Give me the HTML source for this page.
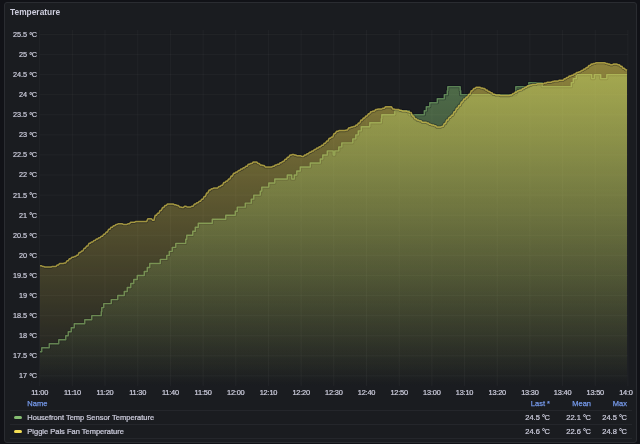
<!DOCTYPE html>
<html><head><meta charset="utf-8"><style>
html,body{margin:0;padding:0;}
body{width:640px;height:444px;overflow:hidden;background:#111217;position:relative;font-family:"Liberation Sans",sans-serif;}
.panel{position:absolute;left:4px;top:2px;width:631px;height:439px;background:#1a1c20;border:1px solid #2a2c31;border-radius:3px;overflow:hidden;}
.clip{position:absolute;left:0;top:0;width:636px;height:444px;overflow:hidden;will-change:transform;}
.t{position:absolute;white-space:nowrap;color:#ccccdc;-webkit-text-stroke:0.22px #ccccdc;}
.title{left:10px;top:7px;font-size:8.4px;font-weight:bold;line-height:10px;-webkit-text-stroke:0;}
svg{position:absolute;left:0;top:0;}
.yl{left:-3px;width:40px;text-align:right;font-size:7.3px;line-height:10px;-webkit-text-stroke:0.2px #ccccdc;}
.xl{top:387.8px;width:40px;text-align:center;font-size:7.4px;letter-spacing:-0.2px;line-height:10px;}
.leg{font-size:7.5px;line-height:10px;}
.dg{position:relative;top:0.12em;margin-right:-0.05em;}
.hd{color:#7598e8;-webkit-text-stroke:0.25px #7598e8;}
.rule{position:absolute;left:10px;width:622px;height:1px;background:#24262b;}
.mk{position:absolute;left:14.1px;width:8px;height:3px;border-radius:1.5px;}
</style></head><body>
<div class="panel"></div>
<div class="clip">
<svg width="640" height="444" viewBox="0 0 640 444">
<defs>
<linearGradient id="gg" gradientUnits="userSpaceOnUse" x1="0" y1="30" x2="0" y2="386">
<stop offset="0" stop-color="#85bd72" stop-opacity="0.58"/><stop offset="1" stop-color="#85bd72" stop-opacity="0"/></linearGradient>
<linearGradient id="yg" gradientUnits="userSpaceOnUse" x1="0" y1="30" x2="0" y2="386">
<stop offset="0" stop-color="#f5df55" stop-opacity="0.58"/><stop offset="1" stop-color="#f5df55" stop-opacity="0"/></linearGradient>
</defs>
<path d="M39.70,30V386M72.38,30V386M105.06,30V386M137.74,30V386M170.42,30V386M203.10,30V386M235.78,30V386M268.46,30V386M301.14,30V386M333.82,30V386M366.50,30V386M399.18,30V386M431.86,30V386M464.54,30V386M497.22,30V386M529.90,30V386M562.58,30V386M595.26,30V386M627.94,30V386M39.7,34.40H628M39.7,54.49H628M39.7,74.58H628M39.7,94.67H628M39.7,114.76H628M39.7,134.85H628M39.7,154.94H628M39.7,175.03H628M39.7,195.12H628M39.7,215.21H628M39.7,235.30H628M39.7,255.39H628M39.7,275.48H628M39.7,295.57H628M39.7,315.66H628M39.7,335.75H628M39.7,355.84H628M39.7,375.93H628" stroke="rgba(204,204,220,0.045)" stroke-width="1" fill="none"/>
<path d="M40.00,351.82 L41.75,351.82 L41.75,347.80 L49.25,347.80 L49.25,343.79 L58.75,343.79 L58.75,339.77 L65.75,339.77 L65.75,335.75 L68.25,335.75 L68.25,331.73 L71.25,331.73 L71.25,327.71 L74.25,327.71 L74.25,323.70 L84.75,323.70 L84.75,319.68 L91.75,319.68 L91.75,315.66 L101.25,315.66 L101.25,311.64 L101.75,311.64 L101.75,307.62 L103.75,307.62 L103.75,303.61 L111.25,303.61 L111.25,299.59 L117.75,299.59 L117.75,295.57 L124.25,295.57 L124.25,291.55 L127.25,291.55 L127.25,287.53 L130.75,287.53 L130.75,283.52 L133.75,283.52 L133.75,279.50 L137.25,279.50 L137.25,275.48 L144.25,275.48 L144.25,271.46 L147.25,271.46 L147.25,267.44 L149.75,267.44 L149.75,263.43 L160.25,263.43 L160.25,259.41 L166.75,259.41 L166.75,255.39 L169.25,255.39 L169.25,251.37 L172.25,251.37 L172.25,247.35 L175.75,247.35 L175.75,243.34 L185.75,243.34 L185.75,239.32 L186.75,239.32 L186.75,235.30 L192.75,235.30 L192.75,231.28 L195.25,231.28 L195.25,227.26 L198.25,227.26 L198.25,223.25 L212.25,223.25 L212.25,219.23 L225.75,219.23 L225.75,215.21 L235.25,215.21 L235.25,211.19 L237.25,211.19 L237.25,207.17 L245.25,207.17 L245.25,203.16 L251.25,203.16 L251.25,199.14 L253.75,199.14 L253.75,195.12 L260.25,195.12 L260.25,191.10 L261.75,191.10 L261.75,187.08 L268.75,187.08 L268.75,183.07 L274.75,183.07 L274.75,179.05 L287.25,179.05 L287.25,175.03 L291.75,175.03 L291.75,179.05 L294.25,179.05 L294.25,175.03 L296.75,175.03 L296.75,171.01 L300.25,171.01 L300.25,166.99 L310.25,166.99 L310.25,162.98 L320.25,162.98 L320.25,158.96 L322.75,158.96 L322.75,154.94 L327.25,154.94 L327.25,150.92 L333.25,150.92 L333.25,154.94 L334.75,154.94 L334.75,150.92 L338.75,150.92 L338.75,146.90 L341.75,146.90 L341.75,142.89 L352.75,142.89 L352.75,138.87 L355.75,138.87 L355.75,134.85 L358.25,134.85 L358.25,130.83 L361.25,130.83 L361.25,126.81 L369.75,126.81 L369.75,122.80 L381.25,122.80 L381.25,118.78 L381.75,118.78 L381.75,114.76 L394.75,114.76 L394.75,110.74 L409.25,110.74 L409.25,114.76 L424.25,114.76 L424.25,110.74 L426.25,110.74 L426.25,106.72 L429.75,106.72 L429.75,102.71 L437.25,102.71 L437.25,98.69 L444.25,98.69 L444.25,94.67 L447.25,94.67 L447.25,90.65 L447.75,90.65 L447.75,86.63 L460.25,86.63 L460.25,90.65 L460.75,90.65 L460.75,94.67 L515.75,94.67 L515.75,86.63 L528.75,86.63 L528.75,82.62 L542.25,82.62 L542.25,86.63 L571.25,86.63 L571.25,82.62 L573.25,82.62 L573.25,78.60 L576.25,78.60 L576.25,74.58 L591.75,74.58 L591.75,78.60 L594.25,78.60 L594.25,74.58 L600.75,74.58 L600.75,78.60 L606.75,78.60 L606.75,74.58 L627.00,74.58 L627.00,386 L40.00,386 Z" fill="url(#gg)"/>
<path d="M40.00,351.82 L41.75,351.82 L41.75,347.80 L49.25,347.80 L49.25,343.79 L58.75,343.79 L58.75,339.77 L65.75,339.77 L65.75,335.75 L68.25,335.75 L68.25,331.73 L71.25,331.73 L71.25,327.71 L74.25,327.71 L74.25,323.70 L84.75,323.70 L84.75,319.68 L91.75,319.68 L91.75,315.66 L101.25,315.66 L101.25,311.64 L101.75,311.64 L101.75,307.62 L103.75,307.62 L103.75,303.61 L111.25,303.61 L111.25,299.59 L117.75,299.59 L117.75,295.57 L124.25,295.57 L124.25,291.55 L127.25,291.55 L127.25,287.53 L130.75,287.53 L130.75,283.52 L133.75,283.52 L133.75,279.50 L137.25,279.50 L137.25,275.48 L144.25,275.48 L144.25,271.46 L147.25,271.46 L147.25,267.44 L149.75,267.44 L149.75,263.43 L160.25,263.43 L160.25,259.41 L166.75,259.41 L166.75,255.39 L169.25,255.39 L169.25,251.37 L172.25,251.37 L172.25,247.35 L175.75,247.35 L175.75,243.34 L185.75,243.34 L185.75,239.32 L186.75,239.32 L186.75,235.30 L192.75,235.30 L192.75,231.28 L195.25,231.28 L195.25,227.26 L198.25,227.26 L198.25,223.25 L212.25,223.25 L212.25,219.23 L225.75,219.23 L225.75,215.21 L235.25,215.21 L235.25,211.19 L237.25,211.19 L237.25,207.17 L245.25,207.17 L245.25,203.16 L251.25,203.16 L251.25,199.14 L253.75,199.14 L253.75,195.12 L260.25,195.12 L260.25,191.10 L261.75,191.10 L261.75,187.08 L268.75,187.08 L268.75,183.07 L274.75,183.07 L274.75,179.05 L287.25,179.05 L287.25,175.03 L291.75,175.03 L291.75,179.05 L294.25,179.05 L294.25,175.03 L296.75,175.03 L296.75,171.01 L300.25,171.01 L300.25,166.99 L310.25,166.99 L310.25,162.98 L320.25,162.98 L320.25,158.96 L322.75,158.96 L322.75,154.94 L327.25,154.94 L327.25,150.92 L333.25,150.92 L333.25,154.94 L334.75,154.94 L334.75,150.92 L338.75,150.92 L338.75,146.90 L341.75,146.90 L341.75,142.89 L352.75,142.89 L352.75,138.87 L355.75,138.87 L355.75,134.85 L358.25,134.85 L358.25,130.83 L361.25,130.83 L361.25,126.81 L369.75,126.81 L369.75,122.80 L381.25,122.80 L381.25,118.78 L381.75,118.78 L381.75,114.76 L394.75,114.76 L394.75,110.74 L409.25,110.74 L409.25,114.76 L424.25,114.76 L424.25,110.74 L426.25,110.74 L426.25,106.72 L429.75,106.72 L429.75,102.71 L437.25,102.71 L437.25,98.69 L444.25,98.69 L444.25,94.67 L447.25,94.67 L447.25,90.65 L447.75,90.65 L447.75,86.63 L460.25,86.63 L460.25,90.65 L460.75,90.65 L460.75,94.67 L515.75,94.67 L515.75,86.63 L528.75,86.63 L528.75,82.62 L542.25,82.62 L542.25,86.63 L571.25,86.63 L571.25,82.62 L573.25,82.62 L573.25,78.60 L576.25,78.60 L576.25,74.58 L591.75,74.58 L591.75,78.60 L594.25,78.60 L594.25,74.58 L600.75,74.58 L600.75,78.60 L606.75,78.60 L606.75,74.58 L627.00,74.58" fill="none" stroke="#0a0c16" stroke-opacity="0.35" stroke-width="3.2" stroke-linejoin="round"/>
<path d="M40.00,351.82 L41.75,351.82 L41.75,347.80 L49.25,347.80 L49.25,343.79 L58.75,343.79 L58.75,339.77 L65.75,339.77 L65.75,335.75 L68.25,335.75 L68.25,331.73 L71.25,331.73 L71.25,327.71 L74.25,327.71 L74.25,323.70 L84.75,323.70 L84.75,319.68 L91.75,319.68 L91.75,315.66 L101.25,315.66 L101.25,311.64 L101.75,311.64 L101.75,307.62 L103.75,307.62 L103.75,303.61 L111.25,303.61 L111.25,299.59 L117.75,299.59 L117.75,295.57 L124.25,295.57 L124.25,291.55 L127.25,291.55 L127.25,287.53 L130.75,287.53 L130.75,283.52 L133.75,283.52 L133.75,279.50 L137.25,279.50 L137.25,275.48 L144.25,275.48 L144.25,271.46 L147.25,271.46 L147.25,267.44 L149.75,267.44 L149.75,263.43 L160.25,263.43 L160.25,259.41 L166.75,259.41 L166.75,255.39 L169.25,255.39 L169.25,251.37 L172.25,251.37 L172.25,247.35 L175.75,247.35 L175.75,243.34 L185.75,243.34 L185.75,239.32 L186.75,239.32 L186.75,235.30 L192.75,235.30 L192.75,231.28 L195.25,231.28 L195.25,227.26 L198.25,227.26 L198.25,223.25 L212.25,223.25 L212.25,219.23 L225.75,219.23 L225.75,215.21 L235.25,215.21 L235.25,211.19 L237.25,211.19 L237.25,207.17 L245.25,207.17 L245.25,203.16 L251.25,203.16 L251.25,199.14 L253.75,199.14 L253.75,195.12 L260.25,195.12 L260.25,191.10 L261.75,191.10 L261.75,187.08 L268.75,187.08 L268.75,183.07 L274.75,183.07 L274.75,179.05 L287.25,179.05 L287.25,175.03 L291.75,175.03 L291.75,179.05 L294.25,179.05 L294.25,175.03 L296.75,175.03 L296.75,171.01 L300.25,171.01 L300.25,166.99 L310.25,166.99 L310.25,162.98 L320.25,162.98 L320.25,158.96 L322.75,158.96 L322.75,154.94 L327.25,154.94 L327.25,150.92 L333.25,150.92 L333.25,154.94 L334.75,154.94 L334.75,150.92 L338.75,150.92 L338.75,146.90 L341.75,146.90 L341.75,142.89 L352.75,142.89 L352.75,138.87 L355.75,138.87 L355.75,134.85 L358.25,134.85 L358.25,130.83 L361.25,130.83 L361.25,126.81 L369.75,126.81 L369.75,122.80 L381.25,122.80 L381.25,118.78 L381.75,118.78 L381.75,114.76 L394.75,114.76 L394.75,110.74 L409.25,110.74 L409.25,114.76 L424.25,114.76 L424.25,110.74 L426.25,110.74 L426.25,106.72 L429.75,106.72 L429.75,102.71 L437.25,102.71 L437.25,98.69 L444.25,98.69 L444.25,94.67 L447.25,94.67 L447.25,90.65 L447.75,90.65 L447.75,86.63 L460.25,86.63 L460.25,90.65 L460.75,90.65 L460.75,94.67 L515.75,94.67 L515.75,86.63 L528.75,86.63 L528.75,82.62 L542.25,82.62 L542.25,86.63 L571.25,86.63 L571.25,82.62 L573.25,82.62 L573.25,78.60 L576.25,78.60 L576.25,74.58 L591.75,74.58 L591.75,78.60 L594.25,78.60 L594.25,74.58 L600.75,74.58 L600.75,78.60 L606.75,78.60 L606.75,74.58 L627.00,74.58" fill="none" stroke="#85bd72" stroke-opacity="0.62" stroke-width="1.4" stroke-linejoin="round"/>
<path d="M40.00,265.70 L41.23,265.70 L42.45,266.40 L43.67,266.40 L44.90,267.10 L46.12,267.10 L47.35,267.10 L48.58,267.10 L49.80,267.10 L51.02,267.10 L52.25,266.40 L53.48,266.40 L54.70,266.40 L55.93,266.40 L57.15,265.00 L58.38,265.00 L59.60,263.60 L60.83,263.60 L62.05,263.60 L63.27,263.60 L64.50,262.90 L65.72,262.90 L66.95,260.80 L68.18,260.80 L69.40,258.70 L70.62,258.70 L71.85,257.30 L73.08,257.30 L74.30,256.60 L75.53,256.60 L76.75,255.20 L77.97,255.20 L79.20,252.40 L80.43,252.40 L81.65,251.00 L82.88,251.00 L84.10,248.20 L85.33,248.20 L86.55,246.10 L87.78,246.10 L89.00,243.30 L90.22,243.30 L91.45,241.90 L92.68,241.90 L93.90,240.50 L95.12,240.50 L96.35,239.10 L97.58,239.10 L98.80,237.70 L100.03,237.70 L101.25,236.30 L102.47,236.30 L103.70,234.20 L104.93,234.20 L106.15,232.10 L107.38,232.10 L108.60,229.30 L109.83,229.30 L111.05,227.20 L112.28,227.20 L113.50,225.80 L114.72,225.80 L115.95,224.40 L117.18,224.40 L118.40,223.70 L119.62,223.70 L120.85,223.70 L122.08,223.70 L123.30,224.40 L124.53,224.40 L125.75,224.40 L126.97,224.40 L128.20,223.70 L129.43,223.70 L130.65,222.30 L131.88,222.30 L133.10,222.30 L134.33,222.30 L135.55,221.60 L136.78,221.60 L138.00,221.60 L139.22,221.60 L140.45,221.60 L141.68,221.60 L142.90,221.60 L144.12,221.60 L145.35,221.60 L146.58,221.60 L147.80,218.80 L149.03,218.80 L150.25,218.80 L151.47,218.80 L152.70,220.20 L153.93,220.20 L155.15,215.30 L156.38,215.30 L157.60,213.20 L158.83,213.20 L160.05,210.40 L161.28,210.40 L162.50,207.60 L163.72,207.60 L164.95,205.50 L166.18,205.50 L167.40,204.10 L168.62,204.10 L169.85,204.10 L171.08,204.10 L172.30,204.10 L173.53,204.10 L174.75,204.80 L175.98,204.80 L177.20,205.50 L178.43,205.50 L179.65,206.90 L180.88,206.90 L182.10,207.60 L183.33,207.60 L184.55,206.20 L185.78,206.20 L187.00,206.90 L188.23,206.90 L189.45,206.90 L190.68,206.90 L191.90,206.20 L193.12,206.20 L194.35,204.10 L195.58,204.10 L196.80,202.70 L198.03,202.70 L199.25,201.30 L200.48,201.30 L201.70,199.20 L202.93,199.20 L204.15,196.40 L205.38,196.40 L206.60,192.90 L207.83,192.90 L209.05,190.10 L210.28,190.10 L211.50,188.70 L212.73,188.70 L213.95,188.00 L215.18,188.00 L216.40,188.00 L217.62,188.00 L218.85,186.60 L220.08,186.60 L221.30,185.20 L222.53,185.20 L223.75,182.40 L224.98,182.40 L226.20,181.00 L227.43,181.00 L228.65,178.90 L229.88,178.90 L231.10,176.10 L232.33,176.10 L233.55,173.30 L234.78,173.30 L236.00,171.90 L237.23,171.90 L238.45,170.50 L239.68,170.50 L240.90,169.10 L242.12,169.10 L243.35,167.70 L244.58,167.70 L245.80,166.30 L247.03,166.30 L248.25,164.20 L249.48,164.20 L250.70,163.50 L251.93,163.50 L253.15,162.10 L254.38,162.10 L255.60,162.10 L256.83,162.10 L258.05,163.50 L259.27,163.50 L260.50,164.90 L261.73,164.90 L262.95,165.60 L264.18,165.60 L265.40,167.00 L266.62,167.00 L267.85,167.00 L269.08,167.00 L270.30,167.00 L271.52,167.00 L272.75,166.30 L273.98,166.30 L275.20,164.90 L276.43,164.90 L277.65,164.20 L278.88,164.20 L280.10,162.80 L281.33,162.80 L282.55,161.40 L283.77,161.40 L285.00,159.30 L286.23,159.30 L287.45,157.20 L288.68,157.20 L289.90,155.10 L291.12,155.10 L292.35,154.40 L293.58,154.40 L294.80,155.10 L296.02,155.10 L297.25,155.80 L298.48,155.80 L299.70,155.80 L300.93,155.80 L302.15,156.50 L303.38,156.50 L304.60,155.10 L305.83,155.10 L307.05,153.70 L308.27,153.70 L309.50,152.30 L310.73,152.30 L311.95,150.90 L313.18,150.90 L314.40,149.50 L315.62,149.50 L316.85,148.10 L318.08,148.10 L319.30,146.70 L320.52,146.70 L321.75,145.30 L322.98,145.30 L324.20,143.20 L325.43,143.20 L326.65,141.10 L327.88,141.10 L329.10,138.30 L330.33,138.30 L331.55,136.90 L332.77,136.90 L334.00,133.40 L335.23,133.40 L336.45,131.30 L337.68,131.30 L338.90,130.60 L340.12,130.60 L341.35,130.60 L342.58,130.60 L343.80,130.60 L345.02,130.60 L346.25,129.90 L347.48,129.90 L348.70,127.80 L349.93,127.80 L351.15,127.10 L352.38,127.10 L353.60,126.40 L354.83,126.40 L356.05,125.00 L357.27,125.00 L358.50,122.90 L359.73,122.90 L360.95,120.10 L362.18,120.10 L363.40,118.00 L364.62,118.00 L365.85,115.90 L367.08,115.90 L368.30,113.80 L369.52,113.80 L370.75,111.70 L371.98,111.70 L373.20,111.00 L374.43,111.00 L375.65,109.60 L376.88,109.60 L378.10,108.90 L379.33,108.90 L380.55,108.90 L381.77,108.90 L383.00,108.20 L384.23,108.20 L385.45,106.80 L386.68,106.80 L387.90,106.80 L389.12,106.80 L390.35,106.80 L391.58,106.80 L392.80,108.90 L394.02,108.90 L395.25,109.60 L396.48,109.60 L397.70,109.60 L398.93,109.60 L400.15,110.30 L401.38,110.30 L402.60,111.00 L403.83,111.00 L405.05,111.00 L406.27,111.00 L407.50,111.70 L408.73,111.70 L409.95,112.40 L411.18,112.40 L412.40,115.90 L413.62,115.90 L414.85,118.70 L416.08,118.70 L417.30,120.10 L418.52,120.10 L419.75,120.80 L420.98,120.80 L422.20,122.20 L423.43,122.20 L424.65,122.20 L425.88,122.20 L427.10,122.90 L428.33,122.90 L429.55,124.30 L430.77,124.30 L432.00,125.00 L433.23,125.00 L434.45,125.70 L435.68,125.70 L436.90,127.10 L438.12,127.10 L439.35,127.10 L440.58,127.10 L441.80,126.40 L443.03,126.40 L444.25,123.60 L445.48,123.60 L446.70,120.10 L447.93,120.10 L449.15,117.30 L450.38,117.30 L451.60,115.20 L452.83,115.20 L454.05,111.70 L455.28,111.70 L456.50,108.20 L457.73,108.20 L458.95,105.40 L460.18,105.40 L461.40,101.90 L462.62,101.90 L463.85,99.10 L465.08,99.10 L466.30,97.00 L467.53,97.00 L468.75,94.20 L469.98,94.20 L471.20,90.70 L472.43,90.70 L473.65,88.60 L474.88,88.60 L476.10,87.20 L477.33,87.20 L478.55,87.20 L479.78,87.20 L481.00,87.90 L482.23,87.90 L483.45,88.60 L484.68,88.60 L485.90,90.00 L487.12,90.00 L488.35,91.40 L489.58,91.40 L490.80,92.80 L492.03,92.80 L493.25,94.20 L494.48,94.20 L495.70,94.90 L496.93,94.90 L498.15,94.90 L499.38,94.90 L500.60,95.60 L501.83,95.60 L503.05,95.60 L504.28,95.60 L505.50,95.60 L506.73,95.60 L507.95,95.60 L509.18,95.60 L510.40,94.90 L511.62,94.90 L512.85,93.50 L514.08,93.50 L515.30,92.10 L516.52,92.10 L517.75,90.70 L518.98,90.70 L520.20,90.00 L521.43,90.00 L522.65,88.60 L523.88,88.60 L525.10,87.20 L526.33,87.20 L527.55,85.80 L528.77,85.80 L530.00,85.10 L531.23,85.10 L532.45,84.40 L533.68,84.40 L534.90,84.40 L536.12,84.40 L537.35,83.70 L538.58,83.70 L539.80,83.70 L541.02,83.70 L542.25,83.70 L543.48,83.70 L544.70,83.00 L545.93,83.00 L547.15,82.30 L548.38,82.30 L549.60,82.30 L550.83,82.30 L552.05,81.60 L553.28,81.60 L554.50,80.90 L555.73,80.90 L556.95,80.90 L558.18,80.90 L559.40,80.20 L560.62,80.20 L561.85,80.20 L563.08,80.20 L564.30,78.80 L565.53,78.80 L566.75,77.40 L567.98,77.40 L569.20,76.00 L570.43,76.00 L571.65,75.30 L572.88,75.30 L574.10,73.90 L575.33,73.90 L576.55,72.50 L577.78,72.50 L579.00,71.80 L580.23,71.80 L581.45,70.40 L582.68,70.40 L583.90,69.00 L585.12,69.00 L586.35,67.60 L587.58,67.60 L588.80,65.50 L590.03,65.50 L591.25,64.10 L592.48,64.10 L593.70,63.40 L594.93,63.40 L596.15,62.70 L597.38,62.70 L598.60,62.70 L599.83,62.70 L601.05,62.70 L602.28,62.70 L603.50,62.70 L604.73,62.70 L605.95,63.40 L607.18,63.40 L608.40,64.10 L609.62,64.10 L610.85,64.80 L612.08,64.80 L613.30,64.10 L614.53,64.10 L615.75,64.10 L616.98,64.10 L618.20,64.80 L619.43,64.80 L620.65,66.20 L621.88,66.20 L623.10,68.30 L624.33,68.30 L625.55,69.70 L626.28,69.70 L627.00,70.40 L627.00,386 L40.00,386 Z" fill="url(#yg)"/>
<path d="M40.00,265.70 L41.23,265.70 L42.45,266.40 L43.67,266.40 L44.90,267.10 L46.12,267.10 L47.35,267.10 L48.58,267.10 L49.80,267.10 L51.02,267.10 L52.25,266.40 L53.48,266.40 L54.70,266.40 L55.93,266.40 L57.15,265.00 L58.38,265.00 L59.60,263.60 L60.83,263.60 L62.05,263.60 L63.27,263.60 L64.50,262.90 L65.72,262.90 L66.95,260.80 L68.18,260.80 L69.40,258.70 L70.62,258.70 L71.85,257.30 L73.08,257.30 L74.30,256.60 L75.53,256.60 L76.75,255.20 L77.97,255.20 L79.20,252.40 L80.43,252.40 L81.65,251.00 L82.88,251.00 L84.10,248.20 L85.33,248.20 L86.55,246.10 L87.78,246.10 L89.00,243.30 L90.22,243.30 L91.45,241.90 L92.68,241.90 L93.90,240.50 L95.12,240.50 L96.35,239.10 L97.58,239.10 L98.80,237.70 L100.03,237.70 L101.25,236.30 L102.47,236.30 L103.70,234.20 L104.93,234.20 L106.15,232.10 L107.38,232.10 L108.60,229.30 L109.83,229.30 L111.05,227.20 L112.28,227.20 L113.50,225.80 L114.72,225.80 L115.95,224.40 L117.18,224.40 L118.40,223.70 L119.62,223.70 L120.85,223.70 L122.08,223.70 L123.30,224.40 L124.53,224.40 L125.75,224.40 L126.97,224.40 L128.20,223.70 L129.43,223.70 L130.65,222.30 L131.88,222.30 L133.10,222.30 L134.33,222.30 L135.55,221.60 L136.78,221.60 L138.00,221.60 L139.22,221.60 L140.45,221.60 L141.68,221.60 L142.90,221.60 L144.12,221.60 L145.35,221.60 L146.58,221.60 L147.80,218.80 L149.03,218.80 L150.25,218.80 L151.47,218.80 L152.70,220.20 L153.93,220.20 L155.15,215.30 L156.38,215.30 L157.60,213.20 L158.83,213.20 L160.05,210.40 L161.28,210.40 L162.50,207.60 L163.72,207.60 L164.95,205.50 L166.18,205.50 L167.40,204.10 L168.62,204.10 L169.85,204.10 L171.08,204.10 L172.30,204.10 L173.53,204.10 L174.75,204.80 L175.98,204.80 L177.20,205.50 L178.43,205.50 L179.65,206.90 L180.88,206.90 L182.10,207.60 L183.33,207.60 L184.55,206.20 L185.78,206.20 L187.00,206.90 L188.23,206.90 L189.45,206.90 L190.68,206.90 L191.90,206.20 L193.12,206.20 L194.35,204.10 L195.58,204.10 L196.80,202.70 L198.03,202.70 L199.25,201.30 L200.48,201.30 L201.70,199.20 L202.93,199.20 L204.15,196.40 L205.38,196.40 L206.60,192.90 L207.83,192.90 L209.05,190.10 L210.28,190.10 L211.50,188.70 L212.73,188.70 L213.95,188.00 L215.18,188.00 L216.40,188.00 L217.62,188.00 L218.85,186.60 L220.08,186.60 L221.30,185.20 L222.53,185.20 L223.75,182.40 L224.98,182.40 L226.20,181.00 L227.43,181.00 L228.65,178.90 L229.88,178.90 L231.10,176.10 L232.33,176.10 L233.55,173.30 L234.78,173.30 L236.00,171.90 L237.23,171.90 L238.45,170.50 L239.68,170.50 L240.90,169.10 L242.12,169.10 L243.35,167.70 L244.58,167.70 L245.80,166.30 L247.03,166.30 L248.25,164.20 L249.48,164.20 L250.70,163.50 L251.93,163.50 L253.15,162.10 L254.38,162.10 L255.60,162.10 L256.83,162.10 L258.05,163.50 L259.27,163.50 L260.50,164.90 L261.73,164.90 L262.95,165.60 L264.18,165.60 L265.40,167.00 L266.62,167.00 L267.85,167.00 L269.08,167.00 L270.30,167.00 L271.52,167.00 L272.75,166.30 L273.98,166.30 L275.20,164.90 L276.43,164.90 L277.65,164.20 L278.88,164.20 L280.10,162.80 L281.33,162.80 L282.55,161.40 L283.77,161.40 L285.00,159.30 L286.23,159.30 L287.45,157.20 L288.68,157.20 L289.90,155.10 L291.12,155.10 L292.35,154.40 L293.58,154.40 L294.80,155.10 L296.02,155.10 L297.25,155.80 L298.48,155.80 L299.70,155.80 L300.93,155.80 L302.15,156.50 L303.38,156.50 L304.60,155.10 L305.83,155.10 L307.05,153.70 L308.27,153.70 L309.50,152.30 L310.73,152.30 L311.95,150.90 L313.18,150.90 L314.40,149.50 L315.62,149.50 L316.85,148.10 L318.08,148.10 L319.30,146.70 L320.52,146.70 L321.75,145.30 L322.98,145.30 L324.20,143.20 L325.43,143.20 L326.65,141.10 L327.88,141.10 L329.10,138.30 L330.33,138.30 L331.55,136.90 L332.77,136.90 L334.00,133.40 L335.23,133.40 L336.45,131.30 L337.68,131.30 L338.90,130.60 L340.12,130.60 L341.35,130.60 L342.58,130.60 L343.80,130.60 L345.02,130.60 L346.25,129.90 L347.48,129.90 L348.70,127.80 L349.93,127.80 L351.15,127.10 L352.38,127.10 L353.60,126.40 L354.83,126.40 L356.05,125.00 L357.27,125.00 L358.50,122.90 L359.73,122.90 L360.95,120.10 L362.18,120.10 L363.40,118.00 L364.62,118.00 L365.85,115.90 L367.08,115.90 L368.30,113.80 L369.52,113.80 L370.75,111.70 L371.98,111.70 L373.20,111.00 L374.43,111.00 L375.65,109.60 L376.88,109.60 L378.10,108.90 L379.33,108.90 L380.55,108.90 L381.77,108.90 L383.00,108.20 L384.23,108.20 L385.45,106.80 L386.68,106.80 L387.90,106.80 L389.12,106.80 L390.35,106.80 L391.58,106.80 L392.80,108.90 L394.02,108.90 L395.25,109.60 L396.48,109.60 L397.70,109.60 L398.93,109.60 L400.15,110.30 L401.38,110.30 L402.60,111.00 L403.83,111.00 L405.05,111.00 L406.27,111.00 L407.50,111.70 L408.73,111.70 L409.95,112.40 L411.18,112.40 L412.40,115.90 L413.62,115.90 L414.85,118.70 L416.08,118.70 L417.30,120.10 L418.52,120.10 L419.75,120.80 L420.98,120.80 L422.20,122.20 L423.43,122.20 L424.65,122.20 L425.88,122.20 L427.10,122.90 L428.33,122.90 L429.55,124.30 L430.77,124.30 L432.00,125.00 L433.23,125.00 L434.45,125.70 L435.68,125.70 L436.90,127.10 L438.12,127.10 L439.35,127.10 L440.58,127.10 L441.80,126.40 L443.03,126.40 L444.25,123.60 L445.48,123.60 L446.70,120.10 L447.93,120.10 L449.15,117.30 L450.38,117.30 L451.60,115.20 L452.83,115.20 L454.05,111.70 L455.28,111.70 L456.50,108.20 L457.73,108.20 L458.95,105.40 L460.18,105.40 L461.40,101.90 L462.62,101.90 L463.85,99.10 L465.08,99.10 L466.30,97.00 L467.53,97.00 L468.75,94.20 L469.98,94.20 L471.20,90.70 L472.43,90.70 L473.65,88.60 L474.88,88.60 L476.10,87.20 L477.33,87.20 L478.55,87.20 L479.78,87.20 L481.00,87.90 L482.23,87.90 L483.45,88.60 L484.68,88.60 L485.90,90.00 L487.12,90.00 L488.35,91.40 L489.58,91.40 L490.80,92.80 L492.03,92.80 L493.25,94.20 L494.48,94.20 L495.70,94.90 L496.93,94.90 L498.15,94.90 L499.38,94.90 L500.60,95.60 L501.83,95.60 L503.05,95.60 L504.28,95.60 L505.50,95.60 L506.73,95.60 L507.95,95.60 L509.18,95.60 L510.40,94.90 L511.62,94.90 L512.85,93.50 L514.08,93.50 L515.30,92.10 L516.52,92.10 L517.75,90.70 L518.98,90.70 L520.20,90.00 L521.43,90.00 L522.65,88.60 L523.88,88.60 L525.10,87.20 L526.33,87.20 L527.55,85.80 L528.77,85.80 L530.00,85.10 L531.23,85.10 L532.45,84.40 L533.68,84.40 L534.90,84.40 L536.12,84.40 L537.35,83.70 L538.58,83.70 L539.80,83.70 L541.02,83.70 L542.25,83.70 L543.48,83.70 L544.70,83.00 L545.93,83.00 L547.15,82.30 L548.38,82.30 L549.60,82.30 L550.83,82.30 L552.05,81.60 L553.28,81.60 L554.50,80.90 L555.73,80.90 L556.95,80.90 L558.18,80.90 L559.40,80.20 L560.62,80.20 L561.85,80.20 L563.08,80.20 L564.30,78.80 L565.53,78.80 L566.75,77.40 L567.98,77.40 L569.20,76.00 L570.43,76.00 L571.65,75.30 L572.88,75.30 L574.10,73.90 L575.33,73.90 L576.55,72.50 L577.78,72.50 L579.00,71.80 L580.23,71.80 L581.45,70.40 L582.68,70.40 L583.90,69.00 L585.12,69.00 L586.35,67.60 L587.58,67.60 L588.80,65.50 L590.03,65.50 L591.25,64.10 L592.48,64.10 L593.70,63.40 L594.93,63.40 L596.15,62.70 L597.38,62.70 L598.60,62.70 L599.83,62.70 L601.05,62.70 L602.28,62.70 L603.50,62.70 L604.73,62.70 L605.95,63.40 L607.18,63.40 L608.40,64.10 L609.62,64.10 L610.85,64.80 L612.08,64.80 L613.30,64.10 L614.53,64.10 L615.75,64.10 L616.98,64.10 L618.20,64.80 L619.43,64.80 L620.65,66.20 L621.88,66.20 L623.10,68.30 L624.33,68.30 L625.55,69.70 L626.28,69.70 L627.00,70.40" fill="none" stroke="#0a0c16" stroke-opacity="0.35" stroke-width="3.2" stroke-linejoin="round"/>
<path d="M40.00,265.70 L41.23,265.70 L42.45,266.40 L43.67,266.40 L44.90,267.10 L46.12,267.10 L47.35,267.10 L48.58,267.10 L49.80,267.10 L51.02,267.10 L52.25,266.40 L53.48,266.40 L54.70,266.40 L55.93,266.40 L57.15,265.00 L58.38,265.00 L59.60,263.60 L60.83,263.60 L62.05,263.60 L63.27,263.60 L64.50,262.90 L65.72,262.90 L66.95,260.80 L68.18,260.80 L69.40,258.70 L70.62,258.70 L71.85,257.30 L73.08,257.30 L74.30,256.60 L75.53,256.60 L76.75,255.20 L77.97,255.20 L79.20,252.40 L80.43,252.40 L81.65,251.00 L82.88,251.00 L84.10,248.20 L85.33,248.20 L86.55,246.10 L87.78,246.10 L89.00,243.30 L90.22,243.30 L91.45,241.90 L92.68,241.90 L93.90,240.50 L95.12,240.50 L96.35,239.10 L97.58,239.10 L98.80,237.70 L100.03,237.70 L101.25,236.30 L102.47,236.30 L103.70,234.20 L104.93,234.20 L106.15,232.10 L107.38,232.10 L108.60,229.30 L109.83,229.30 L111.05,227.20 L112.28,227.20 L113.50,225.80 L114.72,225.80 L115.95,224.40 L117.18,224.40 L118.40,223.70 L119.62,223.70 L120.85,223.70 L122.08,223.70 L123.30,224.40 L124.53,224.40 L125.75,224.40 L126.97,224.40 L128.20,223.70 L129.43,223.70 L130.65,222.30 L131.88,222.30 L133.10,222.30 L134.33,222.30 L135.55,221.60 L136.78,221.60 L138.00,221.60 L139.22,221.60 L140.45,221.60 L141.68,221.60 L142.90,221.60 L144.12,221.60 L145.35,221.60 L146.58,221.60 L147.80,218.80 L149.03,218.80 L150.25,218.80 L151.47,218.80 L152.70,220.20 L153.93,220.20 L155.15,215.30 L156.38,215.30 L157.60,213.20 L158.83,213.20 L160.05,210.40 L161.28,210.40 L162.50,207.60 L163.72,207.60 L164.95,205.50 L166.18,205.50 L167.40,204.10 L168.62,204.10 L169.85,204.10 L171.08,204.10 L172.30,204.10 L173.53,204.10 L174.75,204.80 L175.98,204.80 L177.20,205.50 L178.43,205.50 L179.65,206.90 L180.88,206.90 L182.10,207.60 L183.33,207.60 L184.55,206.20 L185.78,206.20 L187.00,206.90 L188.23,206.90 L189.45,206.90 L190.68,206.90 L191.90,206.20 L193.12,206.20 L194.35,204.10 L195.58,204.10 L196.80,202.70 L198.03,202.70 L199.25,201.30 L200.48,201.30 L201.70,199.20 L202.93,199.20 L204.15,196.40 L205.38,196.40 L206.60,192.90 L207.83,192.90 L209.05,190.10 L210.28,190.10 L211.50,188.70 L212.73,188.70 L213.95,188.00 L215.18,188.00 L216.40,188.00 L217.62,188.00 L218.85,186.60 L220.08,186.60 L221.30,185.20 L222.53,185.20 L223.75,182.40 L224.98,182.40 L226.20,181.00 L227.43,181.00 L228.65,178.90 L229.88,178.90 L231.10,176.10 L232.33,176.10 L233.55,173.30 L234.78,173.30 L236.00,171.90 L237.23,171.90 L238.45,170.50 L239.68,170.50 L240.90,169.10 L242.12,169.10 L243.35,167.70 L244.58,167.70 L245.80,166.30 L247.03,166.30 L248.25,164.20 L249.48,164.20 L250.70,163.50 L251.93,163.50 L253.15,162.10 L254.38,162.10 L255.60,162.10 L256.83,162.10 L258.05,163.50 L259.27,163.50 L260.50,164.90 L261.73,164.90 L262.95,165.60 L264.18,165.60 L265.40,167.00 L266.62,167.00 L267.85,167.00 L269.08,167.00 L270.30,167.00 L271.52,167.00 L272.75,166.30 L273.98,166.30 L275.20,164.90 L276.43,164.90 L277.65,164.20 L278.88,164.20 L280.10,162.80 L281.33,162.80 L282.55,161.40 L283.77,161.40 L285.00,159.30 L286.23,159.30 L287.45,157.20 L288.68,157.20 L289.90,155.10 L291.12,155.10 L292.35,154.40 L293.58,154.40 L294.80,155.10 L296.02,155.10 L297.25,155.80 L298.48,155.80 L299.70,155.80 L300.93,155.80 L302.15,156.50 L303.38,156.50 L304.60,155.10 L305.83,155.10 L307.05,153.70 L308.27,153.70 L309.50,152.30 L310.73,152.30 L311.95,150.90 L313.18,150.90 L314.40,149.50 L315.62,149.50 L316.85,148.10 L318.08,148.10 L319.30,146.70 L320.52,146.70 L321.75,145.30 L322.98,145.30 L324.20,143.20 L325.43,143.20 L326.65,141.10 L327.88,141.10 L329.10,138.30 L330.33,138.30 L331.55,136.90 L332.77,136.90 L334.00,133.40 L335.23,133.40 L336.45,131.30 L337.68,131.30 L338.90,130.60 L340.12,130.60 L341.35,130.60 L342.58,130.60 L343.80,130.60 L345.02,130.60 L346.25,129.90 L347.48,129.90 L348.70,127.80 L349.93,127.80 L351.15,127.10 L352.38,127.10 L353.60,126.40 L354.83,126.40 L356.05,125.00 L357.27,125.00 L358.50,122.90 L359.73,122.90 L360.95,120.10 L362.18,120.10 L363.40,118.00 L364.62,118.00 L365.85,115.90 L367.08,115.90 L368.30,113.80 L369.52,113.80 L370.75,111.70 L371.98,111.70 L373.20,111.00 L374.43,111.00 L375.65,109.60 L376.88,109.60 L378.10,108.90 L379.33,108.90 L380.55,108.90 L381.77,108.90 L383.00,108.20 L384.23,108.20 L385.45,106.80 L386.68,106.80 L387.90,106.80 L389.12,106.80 L390.35,106.80 L391.58,106.80 L392.80,108.90 L394.02,108.90 L395.25,109.60 L396.48,109.60 L397.70,109.60 L398.93,109.60 L400.15,110.30 L401.38,110.30 L402.60,111.00 L403.83,111.00 L405.05,111.00 L406.27,111.00 L407.50,111.70 L408.73,111.70 L409.95,112.40 L411.18,112.40 L412.40,115.90 L413.62,115.90 L414.85,118.70 L416.08,118.70 L417.30,120.10 L418.52,120.10 L419.75,120.80 L420.98,120.80 L422.20,122.20 L423.43,122.20 L424.65,122.20 L425.88,122.20 L427.10,122.90 L428.33,122.90 L429.55,124.30 L430.77,124.30 L432.00,125.00 L433.23,125.00 L434.45,125.70 L435.68,125.70 L436.90,127.10 L438.12,127.10 L439.35,127.10 L440.58,127.10 L441.80,126.40 L443.03,126.40 L444.25,123.60 L445.48,123.60 L446.70,120.10 L447.93,120.10 L449.15,117.30 L450.38,117.30 L451.60,115.20 L452.83,115.20 L454.05,111.70 L455.28,111.70 L456.50,108.20 L457.73,108.20 L458.95,105.40 L460.18,105.40 L461.40,101.90 L462.62,101.90 L463.85,99.10 L465.08,99.10 L466.30,97.00 L467.53,97.00 L468.75,94.20 L469.98,94.20 L471.20,90.70 L472.43,90.70 L473.65,88.60 L474.88,88.60 L476.10,87.20 L477.33,87.20 L478.55,87.20 L479.78,87.20 L481.00,87.90 L482.23,87.90 L483.45,88.60 L484.68,88.60 L485.90,90.00 L487.12,90.00 L488.35,91.40 L489.58,91.40 L490.80,92.80 L492.03,92.80 L493.25,94.20 L494.48,94.20 L495.70,94.90 L496.93,94.90 L498.15,94.90 L499.38,94.90 L500.60,95.60 L501.83,95.60 L503.05,95.60 L504.28,95.60 L505.50,95.60 L506.73,95.60 L507.95,95.60 L509.18,95.60 L510.40,94.90 L511.62,94.90 L512.85,93.50 L514.08,93.50 L515.30,92.10 L516.52,92.10 L517.75,90.70 L518.98,90.70 L520.20,90.00 L521.43,90.00 L522.65,88.60 L523.88,88.60 L525.10,87.20 L526.33,87.20 L527.55,85.80 L528.77,85.80 L530.00,85.10 L531.23,85.10 L532.45,84.40 L533.68,84.40 L534.90,84.40 L536.12,84.40 L537.35,83.70 L538.58,83.70 L539.80,83.70 L541.02,83.70 L542.25,83.70 L543.48,83.70 L544.70,83.00 L545.93,83.00 L547.15,82.30 L548.38,82.30 L549.60,82.30 L550.83,82.30 L552.05,81.60 L553.28,81.60 L554.50,80.90 L555.73,80.90 L556.95,80.90 L558.18,80.90 L559.40,80.20 L560.62,80.20 L561.85,80.20 L563.08,80.20 L564.30,78.80 L565.53,78.80 L566.75,77.40 L567.98,77.40 L569.20,76.00 L570.43,76.00 L571.65,75.30 L572.88,75.30 L574.10,73.90 L575.33,73.90 L576.55,72.50 L577.78,72.50 L579.00,71.80 L580.23,71.80 L581.45,70.40 L582.68,70.40 L583.90,69.00 L585.12,69.00 L586.35,67.60 L587.58,67.60 L588.80,65.50 L590.03,65.50 L591.25,64.10 L592.48,64.10 L593.70,63.40 L594.93,63.40 L596.15,62.70 L597.38,62.70 L598.60,62.70 L599.83,62.70 L601.05,62.70 L602.28,62.70 L603.50,62.70 L604.73,62.70 L605.95,63.40 L607.18,63.40 L608.40,64.10 L609.62,64.10 L610.85,64.80 L612.08,64.80 L613.30,64.10 L614.53,64.10 L615.75,64.10 L616.98,64.10 L618.20,64.80 L619.43,64.80 L620.65,66.20 L621.88,66.20 L623.10,68.30 L624.33,68.30 L625.55,69.70 L626.28,69.70 L627.00,70.40" fill="none" stroke="#f5df55" stroke-opacity="0.6" stroke-width="1.5" stroke-linejoin="round"/>
</svg>
<div class="t title">Temperature</div>
<div class="t yl" style="top:29.80px">25.5 <span class="dg">°</span>C</div>
<div class="t yl" style="top:49.89px">25 <span class="dg">°</span>C</div>
<div class="t yl" style="top:69.98px">24.5 <span class="dg">°</span>C</div>
<div class="t yl" style="top:90.07px">24 <span class="dg">°</span>C</div>
<div class="t yl" style="top:110.16px">23.5 <span class="dg">°</span>C</div>
<div class="t yl" style="top:130.25px">23 <span class="dg">°</span>C</div>
<div class="t yl" style="top:150.34px">22.5 <span class="dg">°</span>C</div>
<div class="t yl" style="top:170.43px">22 <span class="dg">°</span>C</div>
<div class="t yl" style="top:190.52px">21.5 <span class="dg">°</span>C</div>
<div class="t yl" style="top:210.61px">21 <span class="dg">°</span>C</div>
<div class="t yl" style="top:230.70px">20.5 <span class="dg">°</span>C</div>
<div class="t yl" style="top:250.79px">20 <span class="dg">°</span>C</div>
<div class="t yl" style="top:270.88px">19.5 <span class="dg">°</span>C</div>
<div class="t yl" style="top:290.97px">19 <span class="dg">°</span>C</div>
<div class="t yl" style="top:311.06px">18.5 <span class="dg">°</span>C</div>
<div class="t yl" style="top:331.15px">18 <span class="dg">°</span>C</div>
<div class="t yl" style="top:351.24px">17.5 <span class="dg">°</span>C</div>
<div class="t yl" style="top:371.33px">17 <span class="dg">°</span>C</div>
<div style="position:absolute;left:0;top:0;width:632.6px;height:444px;overflow:hidden">
<div class="t xl" style="left:19.70px">11:00</div>
<div class="t xl" style="left:52.38px">11:10</div>
<div class="t xl" style="left:85.06px">11:20</div>
<div class="t xl" style="left:117.74px">11:30</div>
<div class="t xl" style="left:150.42px">11:40</div>
<div class="t xl" style="left:183.10px">11:50</div>
<div class="t xl" style="left:215.78px">12:00</div>
<div class="t xl" style="left:248.46px">12:10</div>
<div class="t xl" style="left:281.14px">12:20</div>
<div class="t xl" style="left:313.82px">12:30</div>
<div class="t xl" style="left:346.50px">12:40</div>
<div class="t xl" style="left:379.18px">12:50</div>
<div class="t xl" style="left:411.86px">13:00</div>
<div class="t xl" style="left:444.54px">13:10</div>
<div class="t xl" style="left:477.22px">13:20</div>
<div class="t xl" style="left:509.90px">13:30</div>
<div class="t xl" style="left:542.58px">13:40</div>
<div class="t xl" style="left:575.26px">13:50</div>
<div class="t xl" style="left:607.94px">14:00</div>
</div>
<div class="t leg hd" style="left:27.3px;top:399.0px">Name</div>
<div class="t leg hd" style="left:500px;top:399.0px;width:50px;text-align:right">Last *</div>
<div class="t leg hd" style="left:541px;top:399.0px;width:50px;text-align:right">Mean</div>
<div class="t leg hd" style="left:577px;top:399.0px;width:50px;text-align:right">Max</div>
<div class="rule" style="top:410px"></div>
<div class="mk" style="top:416.1px;background:#85bd72"></div>
<div class="t leg " style="left:27.3px;top:412.5px">Housefront Temp Sensor Temperature</div>
<div class="t leg " style="left:500px;top:412.5px;width:50px;text-align:right">24.5 <span class="dg">°</span>C</div>
<div class="t leg " style="left:541px;top:412.5px;width:50px;text-align:right">22.1 <span class="dg">°</span>C</div>
<div class="t leg " style="left:577px;top:412.5px;width:50px;text-align:right">24.5 <span class="dg">°</span>C</div>
<div class="rule" style="top:424px"></div>
<div class="mk" style="top:429.8px;background:#f5df55"></div>
<div class="t leg " style="left:27.3px;top:426.6px">Piggie Pals Fan Temperature</div>
<div class="t leg " style="left:500px;top:426.6px;width:50px;text-align:right">24.6 <span class="dg">°</span>C</div>
<div class="t leg " style="left:541px;top:426.6px;width:50px;text-align:right">22.6 <span class="dg">°</span>C</div>
<div class="t leg " style="left:577px;top:426.6px;width:50px;text-align:right">24.8 <span class="dg">°</span>C</div>
<div class="rule" style="top:437.8px"></div>
</div>
</body></html>
